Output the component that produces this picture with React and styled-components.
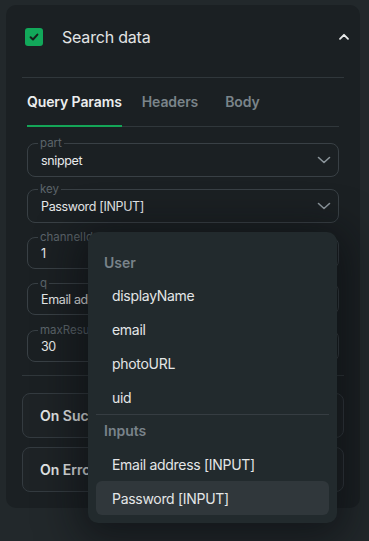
import React from "react";
import styled, { createGlobalStyle } from "styled-components";

const Global = createGlobalStyle`
  html, body { margin: 0; padding: 0; background: #22282b; }
  body { font-family: Inter, "Noto Sans", sans-serif; color: #e4e6e7; }
  * { box-sizing: border-box; }
`;

const Page = styled.div`
  position: relative;
  padding: 5px 9px 34px 6px;
  min-height: 541px;
`;

const Card = styled.div`
  background: #1b2023;
  border-radius: 10px;
  padding: 0 16px 16px;
`;

const Header = styled.div`
  height: 64px;
  display: flex;
  align-items: center;
  padding: 0 10px 0 3px;
  margin-right: -16px;
`;

const Check = styled.div`
  width: 18px;
  height: 18px;
  border-radius: 3px;
  background: #12a85a;
  display: flex;
  align-items: center;
  justify-content: center;
`;

const Title = styled.div`
  margin-left: 19px;
  font-size: 16px;
  letter-spacing: -0.2px;
  color: #e2e4e5;
  flex: 1;
  margin-top: -1px;
`;

const Divider = styled.div`
  height: 1px;
  background: #30373b;
  margin-top: ${(p) => p.$top || 0}px;
`;

const Tabs = styled.div`
  display: flex;
  margin: 0 5px;
  border-bottom: 1px solid #30373b;
  height: 49px;
`;

const Tab = styled.div`
  font-size: 14px;
  font-weight: 600;
  letter-spacing: -0.1px;
  color: ${(p) => (p.$active ? "#eceeef" : "#7a848a")};
  display: flex;
  align-items: center;
  padding-bottom: 1px;
  margin-right: ${(p) => p.$gap || 0}px;
  border-bottom: 2px solid ${(p) => (p.$active ? "#14a557" : "transparent")};
  margin-bottom: -1px;
`;

const Fields = styled.div`
  display: flex;
  flex-direction: column;
  margin: 10px 5px 0;
`;

const Field = styled.fieldset`
  display: block;
  margin: ${(p) => p.$top}px 0 0;
  padding: 0 13px;
  border: 1px solid #394045;
  border-radius: 8px;
  min-width: 0;
`;

const Legend = styled.legend`
  font-size: 11.5px;
  line-height: 12px;
  color: #5b646a;
  padding: 0 2px;
  margin-left: -3px;
  white-space: nowrap;
`;

const Row = styled.div`
  height: ${(p) => p.$h}px;
  display: flex;
  align-items: center;
  padding-bottom: 5px;
`;

const Value = styled.div`
  flex: 1;
  font-size: 12.5px;
  letter-spacing: -0.35px;
  color: #e8eaeb;
  white-space: nowrap;
`;

const FieldChevron = styled.svg`
  margin-right: -6px;
  flex: none;
`;

const ActionBox = styled.div`
  height: 45px;
  border: 1px solid #343b40;
  border-radius: 8px;
  background: #1e2326;
  display: flex;
  align-items: center;
  padding-left: 17px;
  font-size: 14px;
  font-weight: 600;
  color: #e4e6e7;
  margin-top: ${(p) => p.$top}px;
`;

const Menu = styled.div`
  position: absolute;
  left: 88px;
  top: 232px;
  width: 249px;
  background: #222a2d;
  border-radius: 10px;
  padding: 8px;
  box-shadow: 0 8px 40px 10px rgba(8, 10, 12, 0.55);
`;

const GroupLabel = styled.div`
  font-size: 14px;
  font-weight: 600;
  color: #79838a;
  line-height: 20px;
  padding: ${(p) => p.$pad};
`;

const Item = styled.div`
  height: 34px;
  display: flex;
  align-items: center;
  padding-left: 16px;
  font-size: 14px;
  letter-spacing: -0.3px;
  color: #e4e6e7;
  border-radius: 6px;
  background: ${(p) => (p.$selected ? "#30373b" : "transparent")};
`;

const MenuDivider = styled.div`
  height: 1px;
  background: #363d42;
`;

const Down = () => (
  <FieldChevron width="14" height="14" viewBox="0 0 14 14" fill="none">
    <path d="M1.5 4.5 L7 9.5 L12.5 4.5" stroke="#8b959b" strokeWidth="1.6" strokeLinecap="round" strokeLinejoin="round" />
  </FieldChevron>
);

export default function App() {
  return (
    <>
      <Global />
      <Page>
        <Card>
          <Header>
            <Check>
              <svg width="12" height="12" viewBox="0 0 12 12" fill="none">
                <path d="M2.6 6.2 L5 8.5 L9.4 3.6" stroke="#16201b" strokeWidth="2" strokeLinecap="round" strokeLinejoin="round" />
              </svg>
            </Check>
            <Title>Search data</Title>
            <svg width="12" height="12" viewBox="0 0 12 12" fill="none">
              <path d="M2 7.8 L6 3.8 L10 7.8" stroke="#e8eaeb" strokeWidth="1.8" strokeLinecap="round" strokeLinejoin="round" />
            </svg>
          </Header>
          <Divider $top={8} />
          <Tabs>
            <Tab $active $gap={20}>Query Params</Tab>
            <Tab $gap={27}>Headers</Tab>
            <Tab>Body</Tab>
          </Tabs>
          <Fields>
            <Field $top={0}>
              <Legend>part</Legend>
              <Row $h={27}>
                <Value>snippet</Value>
                <Down />
              </Row>
            </Field>
            <Field $top={6}>
              <Legend>key</Legend>
              <Row $h={27}>
                <Value>Password [INPUT]</Value>
                <Down />
              </Row>
            </Field>
            <Field $top={8}>
              <Legend>channelId</Legend>
              <Row $h={25}>
                <Value>1</Value>
              </Row>
            </Field>
            <Field $top={8}>
              <Legend>q</Legend>
              <Row $h={25}>
                <Value>Email address [INPUT]</Value>
              </Row>
            </Field>
            <Field $top={9}>
              <Legend>maxResults</Legend>
              <Row $h={25}>
                <Value>30</Value>
              </Row>
            </Field>
          </Fields>
          <Divider $top={13} />
          <ActionBox $top={17}>On Success</ActionBox>
          <ActionBox $top={9}>On Error</ActionBox>
        </Card>
        <Menu>
          <GroupLabel $pad="13px 8px 5px">User</GroupLabel>
          <Item>displayName</Item>
          <Item>email</Item>
          <Item>photoURL</Item>
          <Item>uid</Item>
          <MenuDivider />
          <GroupLabel $pad="6px 8px 6px">Inputs</GroupLabel>
          <Item>Email address [INPUT]</Item>
          <Item $selected>Password [INPUT]</Item>
        </Menu>
      </Page>
    </>
  );
}
